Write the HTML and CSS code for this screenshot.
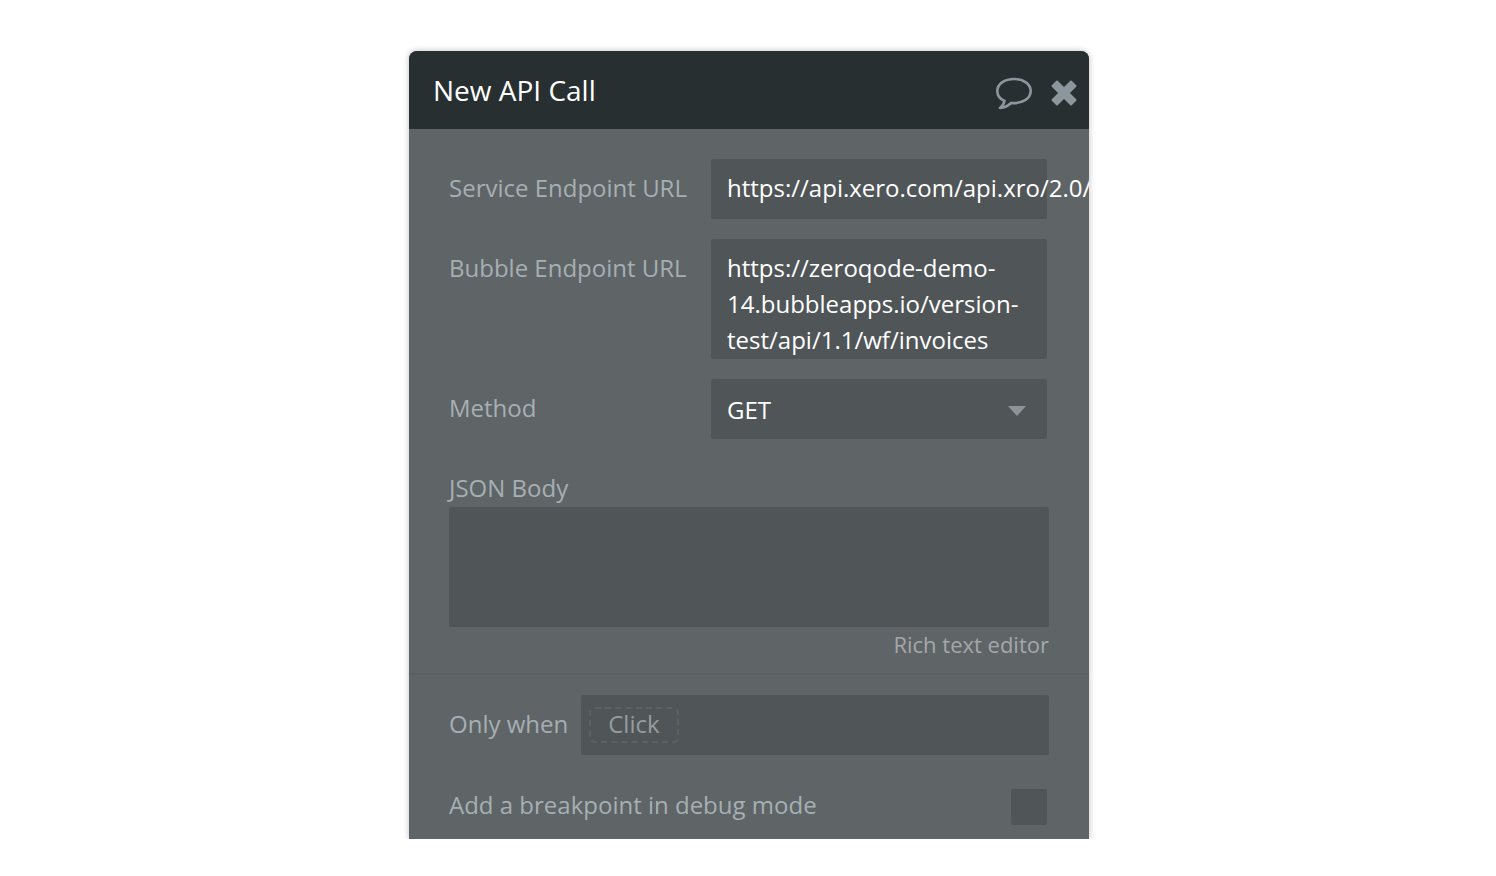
FILE: index.html
```html
<!DOCTYPE html>
<html lang="en">
<head>
<meta charset="utf-8">
<title>New API Call</title>
<link rel="stylesheet" href="styles.css">
</head>
<body class="page">
<div class="stage">
<form class="panel">
  <header class="panel-header">
    <h1 class="panel-title">New API Call</h1>
    <div class="actions">
      <button class="icon-button" type="button" aria-label="Comment">
        <svg width="38" height="34" viewBox="0 0 38 34" fill="none" stroke="currentColor" stroke-width="2.600" stroke-linejoin="round"><path d="M19 3C9.500 3 2.300 8 2.300 15C2.300 19.500 5 23 9.500 25C9 27.500 7.500 30 5 32C10 31.500 13.500 29.500 16 27C27.500 28 35.700 22.500 35.700 15C35.700 8 28.500 3 19 3Z"/></svg>
      </button>
      <button class="icon-button" type="button" aria-label="Close">
        <svg width="26" height="26" viewBox="0 0 26 26" fill="currentColor" stroke="currentColor" stroke-width="2" stroke-linejoin="round"><path d="M6 1.500L13 8.500L20 1.500L24.500 6L17.500 13L24.500 20L20 24.500L13 17.500L6 24.500L1.500 20L8.500 13L1.500 6Z"/></svg>
      </button>
    </div>
  </header>
  <section class="section fields">
    <div class="row">
      <label class="label" for="service">Service Endpoint URL</label>
      <div class="control"><input class="text-input bleed" id="service" type="text" value="https://api.xero.com/api.xro/2.0/Invoices"></div>
    </div>
    <div class="row">
      <label class="label" for="bubble">Bubble Endpoint URL</label>
      <div class="control"><textarea class="endpoint" id="bubble" rows="3" readonly>https://zeroqode-demo-14.bubbleapps.io/version-test/api/1.1/wf/invoices</textarea></div>
    </div>
    <div class="row">
      <label class="label" for="method">Method</label>
      <div class="control select-wrap">
        <select class="select" id="method"><option>GET</option></select>
        <svg class="caret" width="18" height="10" viewBox="0 0 18 10"><path d="M0 0H18L9 10Z" fill="currentColor"/></svg>
      </div>
    </div>
    <div class="stack">
      <label class="label-block" for="json">JSON Body</label>
      <textarea class="json" id="json"></textarea>
      <a class="rich-link" href="#">Rich text editor</a>
    </div>
  </section>
  <section class="section conditions">
    <div class="condition">
      <label class="label" for="when">Only when</label>
      <div class="expression"><button class="chip" id="when" type="button">Click</button></div>
    </div>
    <div class="breakpoint">
      <label class="label-block" for="debug">Add a breakpoint in debug mode</label>
      <input class="checkbox" id="debug" type="checkbox">
    </div>
  </section>
</form>
</div>
</body>
</html>
```
FILE: styles.css
```css
* { box-sizing: border-box; }

.page {
  margin: 0;
  background: #fff;
  font: 24px/36px "Open Sans", "Noto Sans", sans-serif;
  color: #a6afb3;
}

.stage {
  padding: 51px 0 0 2px;
  overflow: hidden;
}

.panel {
  max-width: 680px;
  margin: 0 auto;
  overflow: hidden;
  border-radius: 8px 8px 0 0;
  background: #5f6467;
  box-shadow: 0 0 6px rgba(0, 0, 0, 0.25);
  clip-path: inset(-20px -20px 0 -20px);
}

.panel-header {
  display: flex;
  align-items: center;
  justify-content: space-between;
  min-height: 78px;
  padding: 4px 12px 4px 24px;
  background: #282f31;
}

.panel-title {
  margin: 0;
  font-size: 28px;
  font-weight: 400;
  color: #fff;
}

.actions {
  display: flex;
  align-items: center;
  gap: 18px;
  padding-top: 6px;
}

.icon-button {
  display: flex;
  padding: 0;
  border: 0;
  background: none;
  color: #8c979d;
  cursor: pointer;
}

.section { padding-left: 40px; padding-right: 40px; }

.fields {
  display: flex;
  flex-direction: column;
  gap: 20px;
  padding-top: 30px;
  padding-bottom: 11px;
  border-bottom: 2px solid #5a5f62;
}

.row {
  display: flex;
  justify-content: space-between;
  padding-right: 2px;
}

.label { padding-top: 11px; white-space: nowrap; }
.label-block { display: block; }

.control {
  flex: 0 0 336px;
  display: flex;
  min-height: 60px;
  border-radius: 2px;
  background: #505558;
}

.text-input,
.endpoint,
.select,
.json {
  width: 100%;
  margin: 0;
  padding: 0 16px;
  border: 0;
  border-radius: 2px;
  outline: 0;
  background: transparent;
  color: #fff;
  font: inherit;
}

.bleed {
  flex: 0 0 auto;
  width: calc(100% + 42px);
  padding-right: 0;
  padding-bottom: 2px;
}

.endpoint {
  height: 120px;
  padding-top: 11px;
  overflow: hidden;
  resize: none;
}

.select-wrap { position: relative; }
.select { padding-top: 2px; appearance: none; }

.caret {
  position: absolute;
  top: 27px;
  right: 21px;
  color: #8d9498;
  pointer-events: none;
}

.stack {
  display: flex;
  flex-direction: column;
  padding-top: 11px;
}

.json {
  height: 120px;
  margin-top: 1px;
  background: #505558;
  resize: none;
}

.rich-link {
  align-self: flex-end;
  margin-top: -1px;
  color: #a5a8a9;
  font-size: 22px;
  text-decoration: none;
}

.conditions { padding-top: 20px; padding-bottom: 14px; }

.condition { display: flex; gap: 13px; }

.expression {
  flex: 1;
  display: flex;
  align-items: center;
  height: 60px;
  padding: 0 8px;
  border-radius: 2px;
  background: #505558;
}

.chip {
  height: 36px;
  padding: 0 17px 2px;
  border: 2px dashed #5c6164;
  border-radius: 6px;
  background: none;
  color: #979c9e;
  font: inherit;
  line-height: 30px;
}

.breakpoint {
  display: flex;
  align-items: flex-start;
  justify-content: space-between;
  padding: 32px 2px 0 0;
}

.checkbox {
  appearance: none;
  width: 36px;
  height: 36px;
  margin: 2px 0 0;
  border-radius: 2px;
  background: #505558;
}
```
